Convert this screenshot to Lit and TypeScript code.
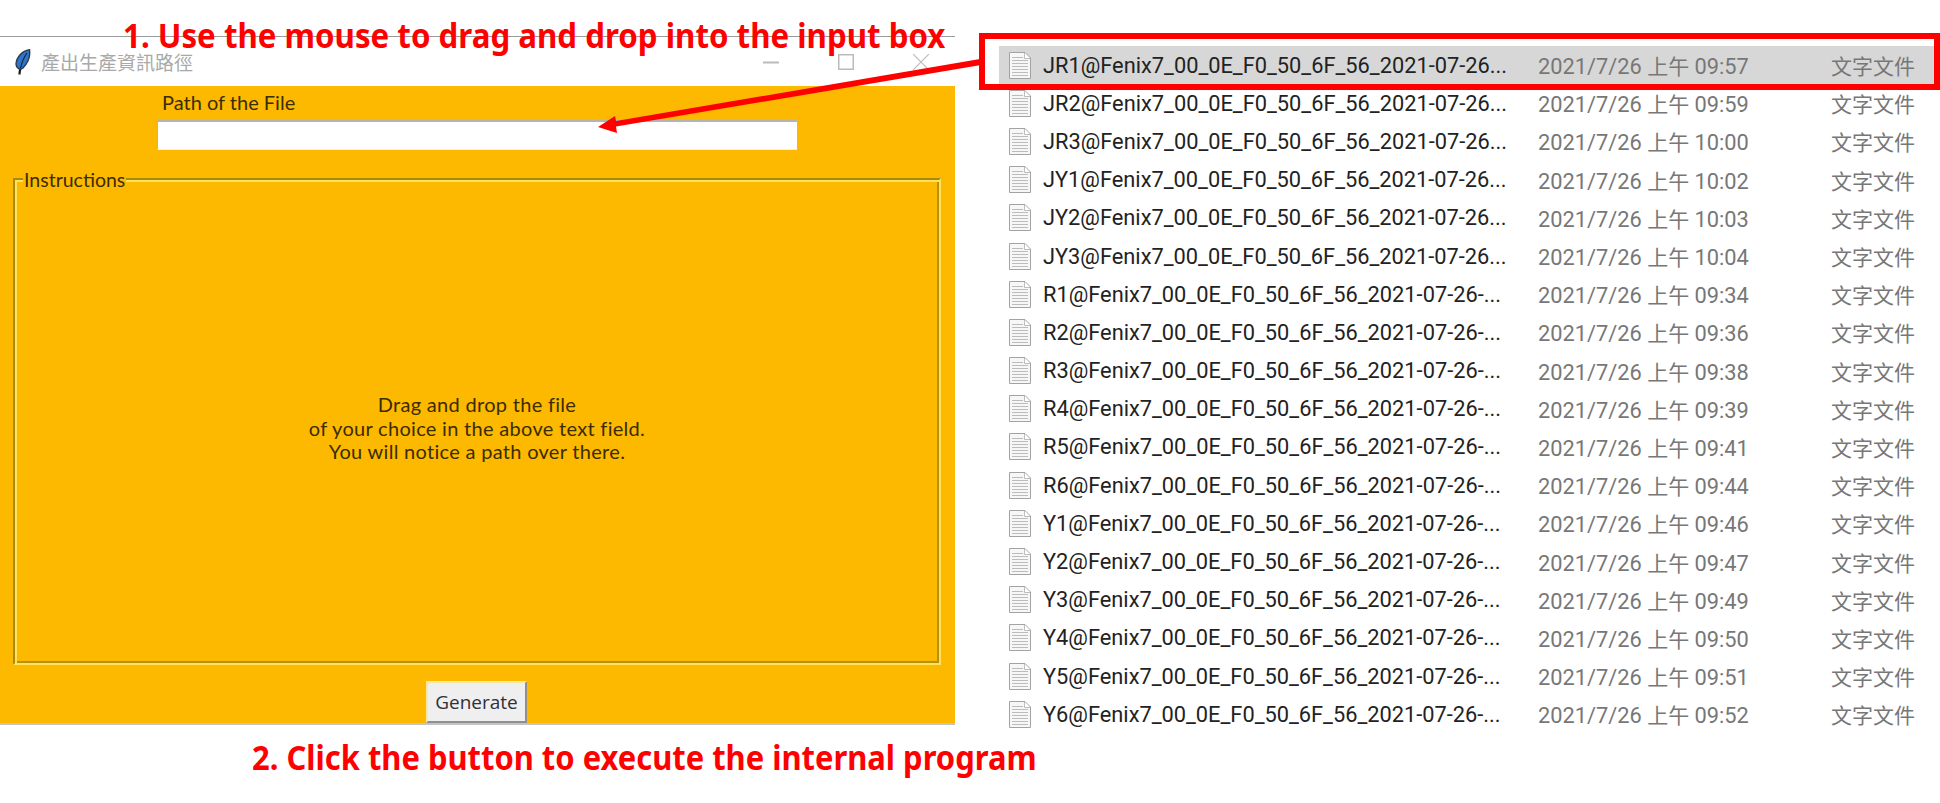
import { LitElement, html, css, svg } from "lit";
import { customElement } from "lit/decorators.js";

const NAME = "@Fenix7_00_0E_F0_50_6F_56_2021-07-26-...";
const FILES: [string, string][] = [
  ["09:57", "JR1@Fenix7_00_0E_F0_50_6F_56_2021-07-26..."],
  ["09:59", "JR2@Fenix7_00_0E_F0_50_6F_56_2021-07-26..."],
  ["10:00", "JR3@Fenix7_00_0E_F0_50_6F_56_2021-07-26..."],
  ["10:02", "JY1@Fenix7_00_0E_F0_50_6F_56_2021-07-26..."],
  ["10:03", "JY2@Fenix7_00_0E_F0_50_6F_56_2021-07-26..."],
  ["10:04", "JY3@Fenix7_00_0E_F0_50_6F_56_2021-07-26..."],
  ["09:34", "R1" + NAME],
  ["09:36", "R2" + NAME],
  ["09:38", "R3" + NAME],
  ["09:39", "R4" + NAME],
  ["09:41", "R5" + NAME],
  ["09:44", "R6" + NAME],
  ["09:46", "Y1" + NAME],
  ["09:47", "Y2" + NAME],
  ["09:49", "Y3" + NAME],
  ["09:50", "Y4" + NAME],
  ["09:51", "Y5" + NAME],
  ["09:52", "Y6" + NAME],
];

const fileIcon = svg`<svg class="doc" width="22" height="27" viewBox="0 0 22 27">
  <path d="M.5.5H16L21.5 6V26.500H.5Z" fill="#f7f7f7" stroke="#a3a3a3"/>
  <path d="M15.500 1V6.500H21" fill="#fff" stroke="#bdbdbd"/>
  <path d="M3 5.500H14M3 8.500H19M3 11.500H19M3 14.500H19M3 17.500H19M3 20.500H19M3 23.500H19" stroke="#bcbcbc"/>
</svg>`;

const feather = svg`<svg width="16" height="26" viewBox="0 0 16 26">
  <path d="M4.500 25.500C4.500 23 5 21 5.500 19" stroke="#1a1a1a" stroke-width="2.200" fill="none"/>
  <path d="M1 15C1.500 8 7 2 14.500 .8C15.500 7 13 14 7.500 19.500C5 21 1 19 1 15Z" fill="#2f74c8" stroke="#2b3a50" stroke-width="1.400"/>
  <path d="M5.500 19C7 13 9 8 12 4" stroke="#14263f" stroke-width="1.200" fill="none"/>
</svg>`;

@customElement("app-root")
export class AppRoot extends LitElement {
  static styles = css`
    :host {
      display: block;
      position: relative;
      width: 1940px;
      height: 803px;
      overflow: hidden;
      background: #fff;
      font-family: Roboto, "Noto Sans CJK TC", sans-serif;
    }
    .stage {
      display: flex;
      align-items: flex-start;
    }
    .window {
      flex: none;
      width: 955px;
      margin-top: 36px;
      border-top: 1px solid #9a9a9a;
    }
    .titlebar {
      height: 49px;
      display: flex;
      align-items: center;
      padding-left: 15px;
      box-sizing: border-box;
      color: #a9a9a9;
      font: 19px "Noto Sans CJK TC", sans-serif;
    }
    .titlebar .t {
      margin-left: 10px;
      flex: 1;
    }
    .ctl {
      flex: none;
      width: 75px;
      height: 16px;
      display: flex;
      justify-content: center;
    }
    .ctl.last {
      margin-right: -3px;
    }
    .body {
      height: 637px;
      box-sizing: border-box;
      background: #fdb900;
      display: flex;
      flex-direction: column;
      color: #3b2c00;
      font-family: Lato, sans-serif;
      font-size: 20px;
    }
    .label {
      margin: 5px 0 0 162px;
      height: 22px;
      line-height: 22px;
    }
    .entry {
      margin: 7px 0 0 157px;
      width: 640px;
      height: 30px;
      box-sizing: border-box;
      background: #fff;
      border-top: 2px solid #b4b4b4;
      border-left: 1px solid #b4b4b4;
      border-bottom: 1px solid #eee;
    }
    .frame {
      position: relative;
      margin: 28px 14px 0 13px;
      height: 487px;
      box-sizing: border-box;
      border-style: solid;
      border-width: 2px;
      border-color: #a98a10 #fde25a #fde25a #a98a10;
      box-shadow: inset 2px 2px 0 #fde25a, inset -2px -2px 0 #b8900a;
      display: flex;
      align-items: center;
      justify-content: center;
      text-align: center;
      line-height: 23.500px;
      letter-spacing: 0.300px;
    }
    .legend {
      position: absolute;
      left: 8px;
      top: -11px;
      padding: 0 1px;
      height: 22px;
      line-height: 22px;
      background: #fdb900;
      font-size: 19.500px;
      letter-spacing: 0;
    }
    .msg {
      margin-top: 14px;
    }
    .btn {
      align-self: flex-start;
      margin: 16px 0 0 426px;
      width: 101px;
      height: 42px;
      box-sizing: border-box;
      background: #efefef;
      border: 2px solid;
      border-color: #fde9a0 #8f8f8f #8f8f8f #fde9a0;
      color: #30303a;
      font: 19px "Open Sans", sans-serif;
      padding: 0;
    }
    .bottom {
      height: 2px;
      background: #c4c4c4;
    }
    .list {
      flex: 1;
      margin-top: 46px;
      padding-left: 44px;
    }
    .row {
      height: 38.200px;
      display: grid;
      grid-template-columns: 22px 507px 293px auto;
      align-items: center;
      padding-left: 10px;
      font-size: 21.800px;
      color: #777;
    }
    .row.sel {
      background: #d7d7d7;
    }
    .row .name {
      color: #222;
      padding-left: 12px;
      white-space: nowrap;
    }
    .cjk {
      font: 21px "Noto Sans CJK TC", sans-serif;
    }
    .doc {
      display: block;
    }
    .note {
      position: absolute;
      color: #ff0000;
      font-family: "Noto Sans", sans-serif;
      font-weight: 700;
      font-size: 33.500px;
      line-height: 44px;
      white-space: nowrap;
      transform-origin: 0 0;
    }
    .note.one {
      left: 123px;
      top: 13px;
      transform: scaleX(0.933);
    }
    .note.two {
      left: 252px;
      top: 735px;
      transform: scaleX(0.923);
    }
    .redbox {
      position: absolute;
      left: 979px;
      top: 33px;
      width: 961px;
      height: 57px;
      box-sizing: border-box;
      border: 6px solid #ff0000;
    }
    .arrow {
      position: absolute;
      left: 590px;
      top: 50px;
    }
  `;

  render() {
    return html`
      <div class="stage">
        <div class="window">
          <div class="titlebar">
            ${feather}
            <span class="t">產出生產資訊路徑</span>
            <span class="ctl"><svg width="16" height="16"><path d="M0 8.500H16" stroke="#bbb" stroke-width="2"/></svg></span>
            <span class="ctl"><svg width="16" height="16"><rect x=".75" y=".75" width="14.500" height="14.500" fill="none" stroke="#bbb" stroke-width="1.500"/></svg></span>
            <span class="ctl last"><svg width="16" height="16"><path d="M0 0L16 16M16 0L0 16" stroke="#bbb" stroke-width="1.200"/></svg></span>
          </div>
          <div class="body">
            <div class="label">Path of the File</div>
            <div class="entry"></div>
            <div class="frame">
              <div class="legend">Instructions</div>
              <div class="msg">Drag and drop the file<br />of your choice in the above text field.<br />You will notice a path over there.</div>
            </div>
            <button class="btn">Generate</button>
          </div>
          <div class="bottom"></div>
        </div>
        <div class="list">
          ${FILES.map(
            ([time, name], i) => html`<div class="row ${i === 0 ? "sel" : ""}">
              ${fileIcon}
              <span class="name">${name}</span>
              <span>2021/7/26 <span class="cjk">上午</span> ${time}</span>
              <span class="cjk">文字文件</span>
            </div>`
          )}
        </div>
      </div>
      <svg class="arrow" width="400" height="90" viewBox="590 50 400 90">
        <polygon points="980,59 981,65 616,126.500 617,133 598,127 615,116 616,121" fill="#ff0000"></polygon>
      </svg>
      <div class="redbox"></div>
      <div class="note one">1. Use the mouse to drag and drop into the input box</div>
      <div class="note two">2. Click the button to execute the internal program</div>
    `;
  }
}
